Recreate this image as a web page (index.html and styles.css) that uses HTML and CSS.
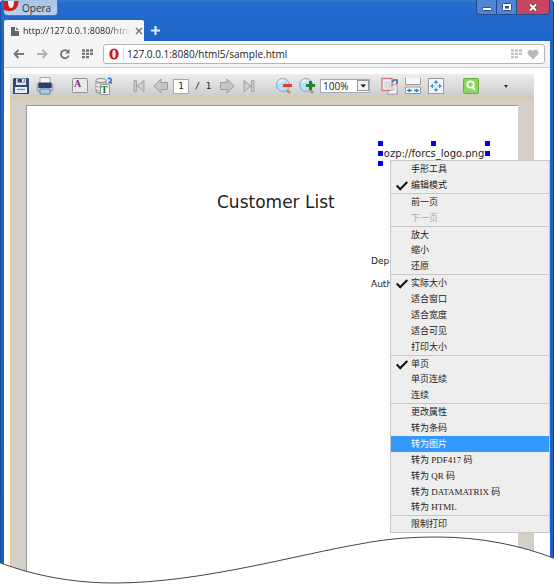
FILE: index.html
```html
<!DOCTYPE html>
<html lang="zh-CN">
<head>
<meta charset="utf-8">
<title>Customer List</title>
<link rel="stylesheet" href="styles.css">
</head>
<body>
<div class="window">
  <header class="titlebar">
    <button class="brand" type="button">
      <svg width="15" height="12" viewBox="0 0 15 12" aria-hidden="true"><path fill="#cf1a20" d="M0 1H14.500C14.500 7 11 11 6 11C3 11 1 10.500 0 9.500Z"/><path fill="#f4f6fa" d="M4 1C4 5.500 5 8 7 8C9 8 10 5.500 10 1Z"/></svg>
      Opera
    </button>
    <div class="controls">
      <button type="button" aria-label="最小化"><svg width="10" height="8" viewBox="0 0 10 8"><rect x=".5" y="4.500" width="9" height="3" rx="1" fill="#fff" stroke="#2d4a7d"/></svg></button>
      <button type="button" aria-label="最大化"><svg width="10" height="8" viewBox="0 0 10 8"><rect x=".5" y=".5" width="9" height="7" rx="1" fill="#fff" stroke="#2d4a7d"/><rect x="3.500" y="3.500" width="3" height="1.500" fill="#4a80cf" stroke="#2d4a7d"/></svg></button>
      <button class="close" type="button" aria-label="关闭"><svg width="10" height="9" viewBox="0 0 10 9"><path d="M2 1.500L8 7.500M8 1.500L2 7.500" stroke="#70283a" stroke-width="3.600"/><path d="M2 1.500L8 7.500M8 1.500L2 7.500" stroke="#fff" stroke-width="2.200"/></svg></button>
    </div>
  </header>
  <div class="tabs">
    <div class="tab">
      <svg width="8" height="10" viewBox="0 0 8 10" aria-hidden="true"><path d="M0 1H4V5H8V10H0Z" fill="#666"/><path d="M5 1L8 4H5Z" fill="#888"/></svg>
      <span class="tab-title">http://127.0.0.1:8080/htm</span>
      <button class="plain" type="button" aria-label="关闭标签页"><svg width="8" height="8" viewBox="0 0 8 8"><path d="M1 1L7 7M7 1L1 7" stroke="#777" stroke-width="1.500"/></svg></button>
    </div>
    <button class="plain" type="button" aria-label="新标签页"><svg width="9" height="9" viewBox="0 0 9 9"><path d="M4.500 0V9M0 4.500H9" stroke="#dbe9fb" stroke-width="2.200"/></svg></button>
  </div>
  <nav class="navbar">
    <button class="plain" type="button" aria-label="后退"><svg width="12" height="10" viewBox="0 0 12 10"><path d="M11 5H2M5.500 1L1.500 5L5.500 9" fill="none" stroke="#777" stroke-width="2"/></svg></button>
    <button class="plain" type="button" aria-label="前进"><svg width="12" height="10" viewBox="0 0 12 10"><path d="M1 5H10M6.500 1L10.500 5L6.500 9" fill="none" stroke="#b4b4b4" stroke-width="2"/></svg></button>
    <button class="plain" type="button" aria-label="重新加载"><svg width="12" height="12" viewBox="0 0 12 12"><path d="M9 3.500A4 4 0 1 0 9.800 7.500" fill="none" stroke="#777" stroke-width="1.900"/><path d="M10.500 .8V5.500H6Z" fill="#777"/></svg></button>
    <button class="plain" type="button" aria-label="快速拨号"><svg width="12" height="10" viewBox="0 0 12 10"><path d="M0 1.500H11M0 4.800H11M0 8.200H7" stroke="#777" stroke-width="2.300" stroke-dasharray="3 1"/></svg></button>
    <div class="address">
      <svg width="10" height="12" viewBox="0 0 10 12" aria-hidden="true"><ellipse cx="5" cy="6" rx="4.700" ry="5.500" fill="#d8141c"/><ellipse cx="5" cy="6" rx="1.700" ry="4" fill="#fff"/></svg>
      <input type="text" aria-label="地址" value="127.0.0.1:8080/html5/sample.html">
      <svg width="12" height="10" viewBox="0 0 12 10" aria-hidden="true"><path d="M0 1.500H11M0 4.800H11M0 8.200H7" stroke="#c2c2c2" stroke-width="2.300" stroke-dasharray="3 1"/></svg>
      <svg width="12" height="11" viewBox="0 0 12 11" aria-hidden="true"><path d="M6 10.500L1.200 5.500C-1 2.500 3 -1.500 6 2C9 -1.500 13 2.500 10.800 5.500Z" fill="#b9b9b9"/></svg>
    </div>
  </nav>
  <main class="content">
    <section class="viewer">
      <div class="toolbar" role="toolbar">
        <div class="group save-group">
          <button class="tool" type="button" aria-label="保存"><svg viewBox="0 0 20 20"><path d="M3 2H17L18 3V18H2V3Z" fill="#2c4a78"/><path d="M5 2.500H15V9H5Z" fill="#dce5ef"/><path d="M6.500 3H13.500V6.500H6.500Z" fill="#334d78"/><path d="M11 3H12.700V6H11Z" fill="#fff"/><path d="M4 11H16V17H4Z" fill="#eef2f7"/><path d="M6 13.500H14" stroke="#8296b4" stroke-width="1.500"/></svg></button>
          <button class="tool" type="button" aria-label="打印"><svg viewBox="0 0 20 20"><path d="M5 1.500H15V8H5Z" fill="#f8f8f8" stroke="#a5a5a5"/><rect x="1.500" y="7" width="17" height="9" rx="2" fill="#a9acb2"/><path d="M3.500 6.500H16.500V12H3.500Z" fill="#253f70"/><path d="M3 13H17" stroke="#edf0f4"/><path d="M5 13H15V18H5Z" fill="#acd1ed" stroke="#637fa4"/></svg></button>
        </div>
        <div class="group text-group">
          <button class="tool" type="button" aria-label="文本"><svg viewBox="0 0 20 20"><rect x="2.500" y="2.500" width="15" height="14" rx="1" fill="#ececec" stroke="#929292"/><path d="M12 5H16M12 8H16M5 12H16M5 15H16" stroke="#dedede"/><text x="4" y="11" class="glyph glyph-a">A</text></svg></button>
          <button class="tool" type="button" aria-label="数据文本"><svg viewBox="0 0 20 20"><path d="M2 5V15C2 18 12 18 12 15V5Z" fill="#c9c9c9" stroke="#888"/><ellipse cx="7" cy="4.500" rx="5" ry="2" fill="#eee" stroke="#888"/><path d="M2 8C3 10 11 10 12 8M2 11.500C3 13.500 11 13.500 12 11.500" fill="none" stroke="#f4f4f4" stroke-width="1.500"/><path d="M6.500 8.500H15.500V18.500H6.500Z" fill="#f5f5f5" stroke="#969696"/><text x="7" y="17" class="glyph glyph-t">T</text><path d="M14 3C16 1 19 4 16 6M14.500 6.500L18 7" fill="none" stroke="#2c68d2" stroke-width="1.500"/></svg></button>
        </div>
        <div class="group pager">
          <button class="tool" type="button" aria-label="首页"><svg viewBox="0 0 20 20"><path d="M5 4.500H7.500V15.500H5Z M15 4.500V15.500L8 10Z" fill="#c9c9c9" stroke="#a4a4a4"/><path d="M13 8.500V11.500L11 10Z" fill="#ddd"/></svg></button>
          <button class="tool" type="button" aria-label="上一页"><svg viewBox="0 0 20 20"><path d="M3 10L10 3V6.500H16.500V13.500H10V17Z" fill="#c6c6c6" stroke="#9c9c9c" stroke-linejoin="round"/></svg></button>
          <input class="page-number" type="text" aria-label="页码" value="1">
          <span class="page-count">/ 1</span>
          <button class="tool" type="button" aria-label="下一页"><svg viewBox="0 0 20 20"><path d="M17 10L10 3V6.500H3.500V13.500H10V17Z" fill="#c6c6c6" stroke="#9c9c9c" stroke-linejoin="round"/></svg></button>
          <button class="tool" type="button" aria-label="末页"><svg viewBox="0 0 20 20"><path d="M15 4.500H12.500V15.500H15Z M5 4.500V15.500L12 10Z" fill="#c9c9c9" stroke="#a4a4a4"/><path d="M7 8.500V11.500L9 10Z" fill="#ddd"/></svg></button>
        </div>
        <div class="group">
          <button class="tool" type="button" aria-label="缩小"><svg viewBox="0 0 20 20"><path d="M12 13L16 17" stroke="#c29658" stroke-width="3"/><circle cx="9" cy="9" r="6.500" fill="#bddcf4" stroke="#84add0"/><path d="M5 7C6 4 9 4 11 5" fill="none" stroke="#eaf6ff" stroke-width="2"/><path d="M9 8H18V11H9Z" fill="#e43c22"/></svg></button>
          <button class="tool" type="button" aria-label="放大"><svg viewBox="0 0 20 20"><path d="M12 13L16 17" stroke="#c29658" stroke-width="3"/><circle cx="9" cy="9" r="6.500" fill="#bddcf4" stroke="#84add0"/><path d="M5 7C6 4 9 4 11 5" fill="none" stroke="#eaf6ff" stroke-width="2"/><path d="M13.500 5V14M9 9.500H18" stroke="#22852d" stroke-width="3"/></svg></button>
          <div class="zoom">
            <select aria-label="缩放"><option>100%</option></select>
            <svg width="12" height="11" viewBox="0 0 12 11" aria-hidden="true"><rect x=".5" y=".5" width="11" height="10" fill="#f1f1f1" stroke="#999"/><path d="M3.500 4.500H9L6.250 7.500Z" fill="#111"/></svg>
          </div>
        </div>
        <div class="group fit-group">
          <button class="tool" type="button" aria-label="实际大小"><svg viewBox="0 0 20 20"><rect x="8" y="9" width="9" height="9" fill="#fafafa" stroke="#999"/><rect x="2" y="2.500" width="10" height="12" fill="#eee" stroke="#d07878" stroke-width="1.300"/><rect x="5" y="6" width="5" height="6" fill="#d5dfe9" stroke="#bfc8d1" stroke-width=".6"/><rect x="11" y="11" width="4" height="4" fill="#c8d4df"/><path d="M13 4H17V8M12 6L14 4" fill="none" stroke="#3a68ab" stroke-width="1.600"/></svg></button>
          <button class="tool" type="button" aria-label="适合宽度"><svg viewBox="0 0 20 20"><path d="M2.500 2V8.500H17.500V2" fill="#f8f8f8" stroke="#999"/><path d="M2.500 17.500V11H17.500V17.500Z" fill="#f8f8f8" stroke="#999"/><path d="M5 14.500H9M11 14.500H15" stroke="#238cc6" stroke-width="1.500"/><path d="M3.500 14.500L7 12.500V16.500ZM16.500 14.500L13 12.500V16.500Z" fill="#238cc6"/></svg></button>
          <button class="tool" type="button" aria-label="适合窗口"><svg viewBox="0 0 20 20"><rect x="2.500" y="2.500" width="15" height="15" fill="#f5f6f7" stroke="#999"/><path d="M10 4L12.500 7H7.500ZM10 16L7.500 13H12.500ZM4 10L7 7.500V12.500ZM16 10L13 12.500V7.500Z" fill="#4298c9"/><path d="M10 6V8.500M10 11.500V14M6 10H8.500M11.500 10H14" stroke="#4298c9"/></svg></button>
        </div>
        <div class="group">
          <button class="tool" type="button" aria-label="查找"><svg viewBox="0 0 20 20"><rect x="2.500" y="2.500" width="15" height="15" rx="1" fill="#8bd65b" stroke="#68b140"/><circle cx="9.500" cy="8.500" r="3.200" fill="none" stroke="#fff" stroke-width="1.800"/><path d="M11.500 11L14 14" stroke="#fff" stroke-width="2.200"/></svg></button>
          <button class="plain more" type="button" aria-label="更多"><svg width="4" height="3" viewBox="0 0 4 3"><path d="M0 0H4L2 3Z" fill="#333"/></svg></button>
        </div>
      </div>
      <div class="canvas">
        <article class="page">
          <div class="logo-object">ozp://forcs_logo.png<i class="handle top left"></i><i class="handle top center"></i><i class="handle top right"></i><i class="handle middle left"></i><i class="handle middle right"></i><i class="handle bottom left"></i></div>
          <h1>Customer List</h1>
          <div class="fields"><p>Dep</p><p>Auth</p></div>
        </article>
      </div>
    </section>
  </main>
  <menu class="context-menu">
    <li><button type="button">手形工具</button></li>
    <li class="checked"><button type="button">编辑模式</button></li>
    <li class="separator"></li>
    <li><button type="button">前一页</button></li>
    <li><button type="button" disabled>下一页</button></li>
    <li class="separator"></li>
    <li><button type="button">放大</button></li>
    <li><button type="button">缩小</button></li>
    <li><button type="button">还原</button></li>
    <li class="separator"></li>
    <li class="checked"><button type="button">实际大小</button></li>
    <li><button type="button">适合窗口</button></li>
    <li><button type="button">适合宽度</button></li>
    <li><button type="button">适合可见</button></li>
    <li><button type="button">打印大小</button></li>
    <li class="separator"></li>
    <li class="checked"><button type="button">单页</button></li>
    <li><button type="button">单页连续</button></li>
    <li><button type="button">连续</button></li>
    <li class="separator"></li>
    <li><button type="button">更改属性</button></li>
    <li><button type="button">转为条码</button></li>
    <li class="active"><button type="button">转为图片</button></li>
    <li><button type="button">转为 PDF417 码</button></li>
    <li><button type="button">转为 QR 码</button></li>
    <li><button type="button">转为 DATAMATRIX 码</button></li>
    <li><button type="button">转为 HTML</button></li>
    <li class="separator"></li>
    <li><button type="button">限制打印</button></li>
  </menu>
  <svg class="torn-edge" viewBox="0 0 554 85" preserveAspectRatio="none" aria-hidden="true"><path d="M-2 62C40 78 80 83 115 83C200 83 300 54 360 44C385 39 410 37 437 37C480 37 520 45 556 59V90H-2Z" fill="#fff" stroke="#444"/></svg>
</div>
</body>
</html>
```

FILE: styles.css
```css
* { box-sizing: border-box; }

body {
  margin: 0;
  background: #fff;
  font-family: "Open Sans", "Noto Sans CJK SC", sans-serif;
  font-size: 10px;
  color: #222;
}

button, input, select { font: inherit; color: inherit; margin: 0; }
button { padding: 0; border: 0; background: none; }
svg { display: block; flex: none; }

.window {
  position: relative;
  display: flex;
  flex-direction: column;
  min-height: 100vh;
  padding: 0 4px;
  overflow: hidden;
  border-radius: 4px 4px 0 0;
  background: linear-gradient(#2e7fd0 0, #276ccd 3px, #1e64c8 42px, #1a5fc9 100%);
  box-shadow: inset 1px 0 #164f9e, inset -1px 0 #123e7c;
}

.titlebar { display: flex; justify-content: space-between; align-items: flex-start; height: 20px; }

.brand {
  display: flex;
  gap: 3px;
  height: 16px;
  padding-right: 6px;
  border: 1px solid #5574a8;
  border-top: 0;
  border-left: 0;
  border-radius: 0 0 4px 4px;
  background: linear-gradient(#a9c4e8, #b9cfee);
  color: #333;
  font-size: 10px;
  line-height: 17px;
}

.controls {
  display: flex;
  height: 15px;
  border: 1px solid #244a8c;
  border-top: 0;
  border-radius: 0 0 4px 4px;
  overflow: hidden;
}
.controls button { display: grid; place-items: center; width: 20px; background: #4d86d6; border-right: 1px solid #244a8c; }
.controls .close { width: 32px; background: #c8455f; border: 0; }

.tabs { display: flex; align-items: center; gap: 7px; height: 21px; padding-right: 1px; }
.tab {
  display: flex;
  align-items: center;
  gap: 4px;
  width: 140px;
  height: 21px;
  padding: 0 6px 0 7px;
  border-radius: 2px 2px 0 0;
  background: #f4f5f6;
}
.tab-title {
  flex: 1;
  font-size: 9px;
  white-space: nowrap;
  mask-image: linear-gradient(90deg, #000 80%, transparent);
}
.plain { display: grid; place-items: center; }

.navbar {
  display: flex;
  align-items: center;
  gap: 11px;
  height: 27px;
  padding: 0 5px 0 9px;
  border-bottom: 1px solid #cfcfcf;
  background: #f4f5f6;
}
.address {
  display: flex;
  flex: 1;
  align-items: center;
  gap: 4px;
  height: 20px;
  margin-left: -2px;
  padding: 0 5px;
  border: 1px solid #b5b5b5;
  border-radius: 3px;
  background: #fff;
}
.address input {
  flex: 1;
  min-width: 0;
  height: 14px;
  padding: 0 3px;
  border: 0;
  border-left: 1px solid #ddd;
  background: none;
  outline: 0;
}

.content { display: flex; flex: 1; padding: 6px 16px 0 6px; background: #fff; }
.viewer { display: flex; flex: 1; flex-direction: column; min-width: 0; }

.toolbar {
  display: flex;
  align-items: center;
  gap: 15px;
  height: 24px;
  background: linear-gradient(#ededed, #dcdcdc 50%, #c9c9c9);
}
.group { display: flex; align-items: center; gap: 3px; }
.save-group { gap: 4px; padding-left: 1px; }
.text-group { gap: 4px; }
.pager { gap: 2px; }
.fit-group { margin-left: -5px; }
.tool, .tool svg { width: 20px; height: 20px; }
.more { margin-left: 20px; }
.glyph { font-family: "Liberation Serif", serif; font-weight: bold; font-size: 10px; }
.glyph-a { fill: #7c287d; }
.glyph-t { fill: #187728; }

.page-number {
  width: 16px;
  height: 15px;
  padding: 0;
  border: 1px solid #aaa;
  background: #fff;
  text-align: center;
}
.page-number, .page-count { font-family: "DejaVu Sans Mono", monospace; font-size: 9px; }
.page-count { width: 24px; text-align: center; }

.zoom { position: relative; }
.zoom select {
  display: block;
  appearance: none;
  width: 50px;
  height: 14px;
  padding: 0 2px;
  border: 1px solid #aaa;
  border-radius: 0;
  background: #fff;
  line-height: 12px;
}
.zoom svg { position: absolute; top: 1px; right: 1px; pointer-events: none; }

.canvas {
  display: flex;
  flex: 1;
  padding: 6px 15px 0;
  border: 1px solid #e2c894;
  border-bottom: 0;
  background: #d4d0c8;
}
.page {
  flex: 1;
  padding-top: 35px;
  border: 1px solid #9b9b9b;
  border-right: 0;
  border-bottom: 0;
  background: #fff;
  font-family: "DejaVu Sans", sans-serif;
}
.page h1 { margin: 24px 0 36px 190px; font-size: 17px; line-height: 24px; font-weight: normal; }
.logo-object {
  position: relative;
  width: 112px;
  height: 25px;
  margin: 0 28px 0 auto;
  line-height: 25px;
  text-align: center;
  white-space: nowrap;
}
.handle { position: absolute; width: 5px; height: 5px; background: #00f; }
.top { top: 0; }
.middle { top: 10px; }
.bottom { bottom: 0; }
.left { left: 0; }
.center { left: 53px; }
.right { right: 0; }

.fields { margin-left: 344px; font-size: 9px; line-height: 23px; }
.fields p { margin: 0; }

.context-menu {
  position: absolute;
  top: 160px;
  right: 4px;
  display: flex;
  flex-direction: column;
  width: 160px;
  height: 373px;
  margin: 0;
  padding: 0;
  border: 1px solid #c8c8c8;
  background: #eee;
  font-family: "Liberation Serif", "Noto Sans CJK SC", serif;
  font-size: 9px;
  list-style: none;
}
.context-menu li { position: relative; flex: 1; min-height: 0; }
.context-menu button { display: block; width: 100%; padding-left: 20px; line-height: 16px; text-align: left; }
.context-menu button:disabled { color: #aaa; }
.context-menu .separator { flex: none; height: 1px; background: #c8c8c8; }
.context-menu .active { background: #39f; color: #fff; }
.checked::before {
  content: "";
  position: absolute;
  top: 2px;
  left: 8px;
  width: 4px;
  height: 9px;
  border: solid #111;
  border-width: 0 2px 2px 0;
  transform: rotate(45deg);
}

.torn-edge { position: absolute; left: 0; bottom: 0; width: 100%; height: 85px; }
```
